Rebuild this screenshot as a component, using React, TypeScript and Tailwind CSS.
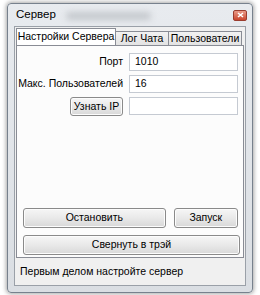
const font = { fontFamily: '"Liberation Sans", Arial, sans-serif' }

function Btn({ label, className }: { label: string; className: string }) {
  return (
    <button
      className={`flex items-center justify-center whitespace-nowrap rounded-[3px] border border-[#8a8a8a] bg-gradient-to-b from-[#f6f6f6] via-[#e9e9e9] to-[#d8d8d8] text-[10.5px] text-black shadow-[inset_0_0_0_1px_#fcfcfc] ${className}`}
    >
      {label}
    </button>
  )
}

function Field({ value }: { value: string }) {
  return (
    <div className="flex h-[18px] w-[109px] items-center border border-[#c5cad2] bg-white px-[5px] text-[10.5px] text-black">
      {value}
    </div>
  )
}

export default function App() {
  return (
    <div className="h-[295px] w-[260px] overflow-hidden bg-white pl-[7px] pt-[3px]" style={font}>
      <div className="flex h-[290px] w-[246px] flex-col rounded-[4px] border border-[#77818d] bg-gradient-to-b from-[#e8ebef] to-[#dadee3] shadow-[0_0_4px_1px_rgba(0,0,0,0.35)]">
        {/* title bar */}
        <div className="relative flex h-[22px] shrink-0 items-center justify-between pl-[8px] pr-[5px]">
          <span className="text-[11.5px] text-black">Сервер</span>
          <div className="absolute left-[58px] top-[8px] h-[8px] w-[85px] rounded-full bg-[#c4c8cd] blur-[3px]" />
          <div className="flex h-[11px] w-[14px] items-center justify-center rounded-[2px] border border-[#9a3c2e] bg-gradient-to-b from-[#e99a88] to-[#c9442c]">
            <svg width="7" height="6" viewBox="0 0 7 6">
              <path d="M1 1 L6 5 M6 1 L1 5" stroke="#fff" strokeWidth="1.6" />
            </svg>
          </div>
        </div>

        {/* client area */}
        <div className="mx-[6px] mb-[6px] flex flex-1 flex-col whitespace-nowrap border border-[#9aa0a8] bg-[#f0f0f0] pt-[1px] text-[10.5px] text-black">
          {/* tabs */}
          <div className="flex h-[17px] items-end pl-[1px]">
            <div className="flex h-[17px] w-[100px] items-center justify-center border border-b-0 border-[#898c95] bg-white">
              Настройки Сервера
            </div>
            <div className="flex h-[14px] w-[53px] items-center justify-center border border-b-0 border-l-0 border-[#898c95] bg-gradient-to-b from-[#f2f2f2] to-[#e3e3e3]">
              Лог Чата
            </div>
            <div className="flex h-[14px] w-[73px] items-center justify-center border border-b-0 border-l-0 border-[#898c95] bg-gradient-to-b from-[#f2f2f2] to-[#e3e3e3]">
              Пользователи
            </div>
          </div>

          {/* tab page */}
          <div className="mx-[1px] flex h-[213px] flex-col border border-[#898c95] bg-[#fcfcfc] pb-[2px] pl-[6px] pr-[5px] pt-[7px]">
            <div className="grid grid-cols-[100px_109px] gap-x-[6px] gap-y-[4px]">
              <div className="flex items-center justify-end">Порт</div>
              <Field value="1010" />
              <div className="flex items-center justify-end">Макс. Пользователей</div>
              <Field value="16" />
              <div className="flex justify-end">
                <Btn label="Узнать IP" className="h-[19px] w-[53px]" />
              </div>
              <div className="h-[19px]">
                <Field value="" />
              </div>
            </div>

            <div className="mt-auto flex gap-[8px]">
              <Btn label="Остановить" className="h-[20px] w-[144px]" />
              <Btn label="Запуск" className="h-[20px] w-[65px]" />
            </div>
            <Btn label="Свернуть в трэй" className="mt-[7px] h-[20px] w-[217px]" />
          </div>

          {/* status */}
          <div className="flex flex-1 items-center pl-[5px]">Первым делом настройте сервер</div>
        </div>
      </div>
    </div>
  )
}
